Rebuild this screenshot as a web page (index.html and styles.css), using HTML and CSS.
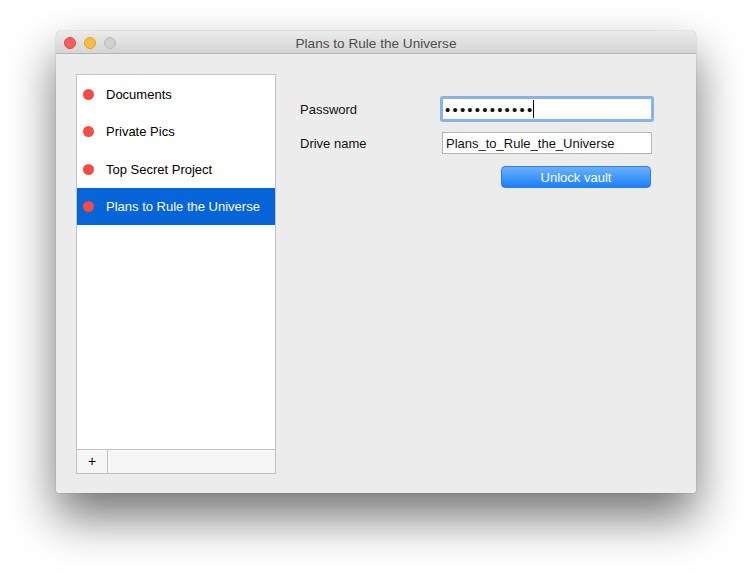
FILE: index.html
```html
<!DOCTYPE html>
<html>
<head>
<meta charset="utf-8">
<link rel="stylesheet" href="styles.css">
</head>
<body>
<div class="window">
  <div class="titlebar">
    <div class="lights">
      <span class="light red"></span>
      <span class="light yellow"></span>
      <span class="light gray"></span>
    </div>
    <div class="title">Plans to Rule the Universe</div>
  </div>
  <div class="content">
    <div class="list">
      <div class="items">
        <div class="item"><span class="dot"></span><span class="label">Documents</span></div>
        <div class="item"><span class="dot"></span><span class="label">Private Pics</span></div>
        <div class="item"><span class="dot"></span><span class="label">Top Secret Project</span></div>
        <div class="item selected"><span class="dot"></span><span class="label">Plans to Rule the Universe</span></div>
      </div>
      <div class="footer">
        <div class="add">+</div>
        <div class="rest"></div>
      </div>
    </div>
    <div class="form">
      <div class="flabel">Password</div>
      <div class="field focused"><span class="dots">••••••••••••</span><span class="caret"></span></div>
      <div class="flabel">Drive name</div>
      <div class="field">Plans_to_Rule_the_Universe</div>
      <div class="button">Unlock vault</div>
    </div>
  </div>
</div>
</body>
</html>
```
FILE: styles.css
```css
* { box-sizing: border-box; }
html, body { margin: 0; padding: 0; background: #ffffff; }
body {
  font-family: "Liberation Sans", Arial, sans-serif;
  font-size: 13px;
  color: #000;
  padding: 31px 0 0 56px;
  min-height: 574px;
}
.window {
  width: 640px;
  height: 462px;
  background: #ececec;
  border-radius: 5px 5px 2px 2px;
  box-shadow: 0 24px 48px rgba(0,0,0,0.55), 0 0 1px rgba(0,0,0,0.5);
  display: flex;
  flex-direction: column;
  overflow: hidden;
}
.titlebar {
  height: 23px;
  flex: none;
  background: linear-gradient(#ebebeb, #d5d5d5);
  border-bottom: 1px solid #b4b4b4;
  display: flex;
  align-items: center;
  position: relative;
}
.lights {
  display: flex;
  gap: 8px;
  padding-left: 8px;
  position: absolute;
  left: 0;
  top: 6px;
}
.light {
  width: 12px;
  height: 12px;
  border-radius: 50%;
  display: block;
}
.red { background: #fc605c; border: 1px solid #e0443e; }
.yellow { background: #fdbc40; border: 1px solid #de9f34; }
.gray { background: #d0d0d0; border: 1px solid #bcbcbc; }
.title {
  flex: 1;
  text-align: center;
  color: #4d4d4d;
  font-size: 13.6px;
  padding-top: 2px;
}
.content {
  flex: 1;
  display: flex;
  align-items: flex-start;
  padding: 20px;
}
.list {
  width: 200px;
  height: 400px;
  background: #fff;
  border: 1px solid #c3c3c3;
  display: flex;
  flex-direction: column;
}
.items {
  flex: 1;
  padding-top: 1px;
}
.item {
  height: 37.3px;
  display: flex;
  align-items: center;
  padding-left: 6px;
}
.dot {
  width: 11px;
  height: 11px;
  border-radius: 50%;
  background: #f54b45;
  flex: none;
}
.item .label {
  margin-left: 12px;
}
.item.selected {
  background: #0564d8;
  color: #fff;
}
.footer {
  height: 24px;
  flex: none;
  border-top: 1px solid #c3c3c3;
  background: #f5f5f5;
  display: flex;
}
.add {
  width: 31px;
  border-right: 1px solid #c3c3c3;
  text-align: center;
  line-height: 22px;
  font-size: 14px;
  color: #000;
}
.rest { flex: 1; }
.form {
  margin-left: 24px;
  padding-top: 24px;
  display: grid;
  grid-template-columns: 142px 210px;
  grid-auto-rows: 22px;
  row-gap: 12px;
  align-items: center;
}
.flabel {
  color: #111;
}
.field {
  height: 22px;
  background: #fff;
  border: 1px solid #b4b4b4;
  padding-left: 3px;
  display: flex;
  align-items: center;
  color: #111;
}
.field.focused {
  border: 1px solid #8cb3e8;
  box-shadow: 0 0 0 2px #87b2ec;
  border-radius: 1px;
  padding-left: 2px;
}
.dots {
  font-size: 15px;
  letter-spacing: 2.2px;
  line-height: 1;
}
.caret {
  width: 1px;
  height: 18px;
  background: #000;
  margin-left: -1px;
}
.button {
  grid-column: 2;
  justify-self: end;
  width: 150px;
  height: 22px;
  margin-right: 1px;
  border-radius: 4px;
  background: linear-gradient(#6bb1fb, #1c7ffb);
  border: 1px solid #2a7ef0;
  color: #fff;
  text-align: center;
  line-height: 21px;
}
```
